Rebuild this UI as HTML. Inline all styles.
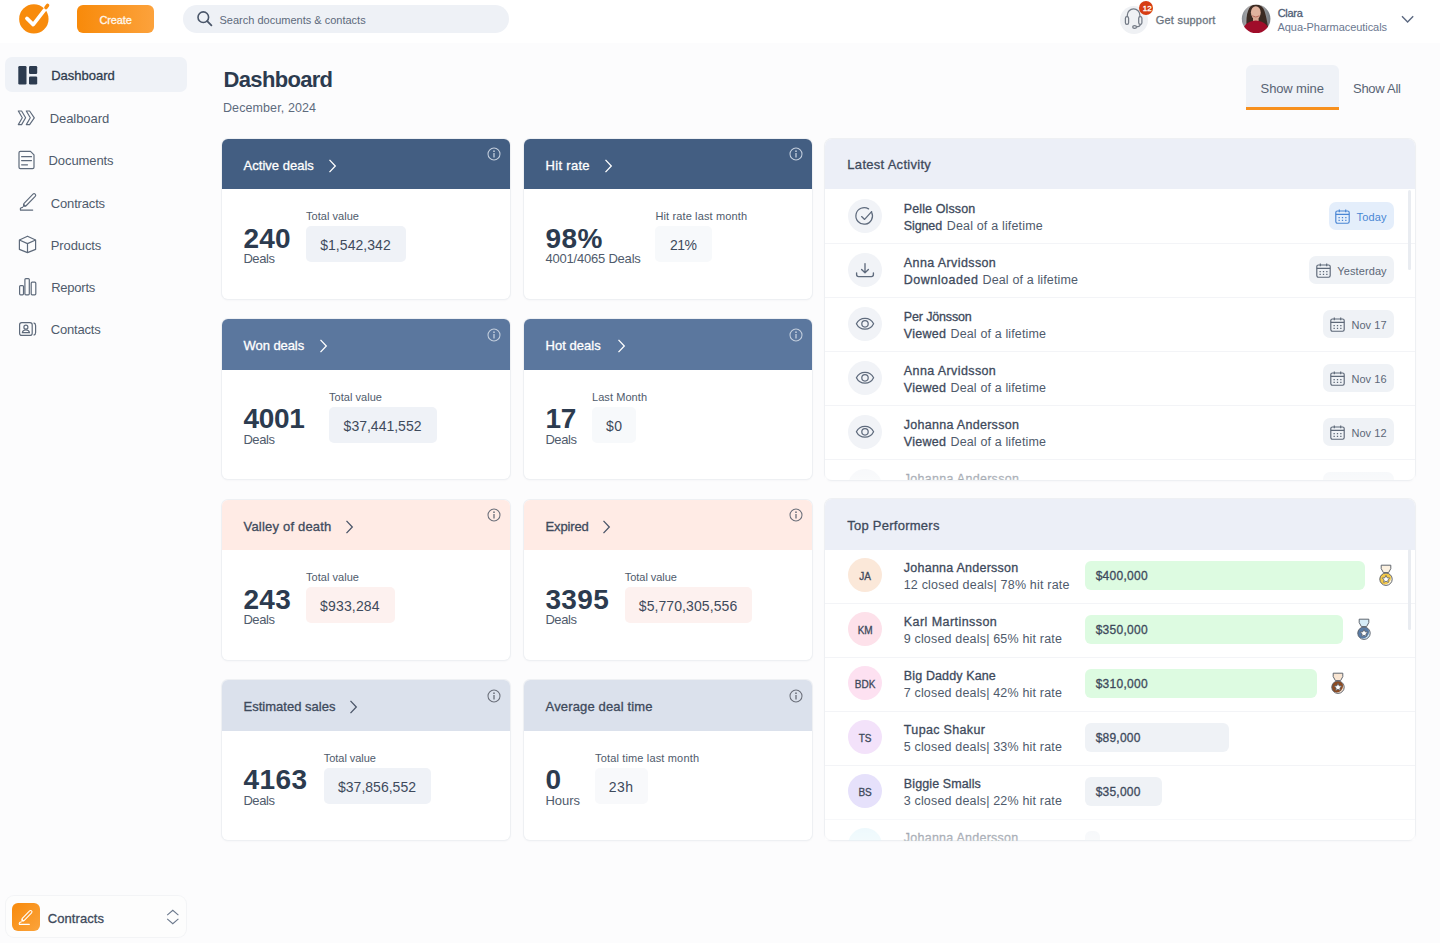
<!DOCTYPE html>
<html><head><meta charset="utf-8"><title>Dashboard</title>
<style>
html,body{margin:0;padding:0;}
body{width:1440px;height:943px;position:relative;overflow:hidden;background:#fcfcfd;font-family:"Liberation Sans",sans-serif;}
.t{position:absolute;white-space:nowrap;line-height:1;}
.r{position:absolute;}
.card{position:absolute;background:#fff;border-radius:6px;overflow:hidden;box-shadow:0 0 0 1px #eef0f3,0 1px 3px rgba(30,40,60,.05);}
.card .ch{position:absolute;left:0;top:0;right:0;height:50.5px;}
.panel{position:absolute;background:#fff;border-radius:7px;overflow:hidden;box-shadow:0 0 0 1px #eef0f3,0 1px 3px rgba(30,40,60,.05);}
.panel .ph{position:absolute;left:0;top:0;right:0;height:50.5px;background:#eceff7;}
</style></head><body>
<div class="r" style="left:0px;top:0px;width:1440px;height:43px;background:#ffffff;border-radius:0px;"></div>
<svg class="r" style="left:14px;top:0px" width="40" height="40" viewBox="14 0 40 40"><circle cx="33.85" cy="18.9" r="14.7" fill="#f88b0c"/>
<path d="M26.9 18.4 L33.2 24.6 L44.6 9.8" fill="none" stroke="#fff" stroke-width="3.6" stroke-linecap="round" stroke-linejoin="round"/>
<path d="M45.9 7.6 L47.6 5.4" stroke="#f88b0c" stroke-width="3.4" stroke-linecap="round"/></svg>
<div class="r" style="left:77px;top:5px;width:77px;height:28px;background:linear-gradient(90deg,#f88a0a,#fca23c);border-radius:6px;"></div>
<div class="t" style="left:99.55px;top:15.00px;font-size:11px;color:#fff8ee;-webkit-text-stroke:0.3px #fff8ee;letter-spacing:-0.160px;">Create</div>
<div class="r" style="left:183px;top:5px;width:326px;height:28px;background:#eef1f6;border-radius:14px;"></div>
<svg class="r" style="left:194px;top:8px" width="22" height="22" viewBox="194 8 22 22"><circle cx="203.3" cy="17.2" r="5.3" fill="none" stroke="#4a5669" stroke-width="1.6"/>
<path d="M207.2 21.1 L211.4 25.3" stroke="#4a5669" stroke-width="1.8" stroke-linecap="round"/></svg>
<div class="t" style="left:219.50px;top:15.00px;font-size:11px;color:#5d6a7c;">Search documents &amp; contacts</div>
<div class="r" style="left:1119.7px;top:5.5px;width:28px;height:28px;border-radius:50%;background:#eff1f4"></div>
<svg class="r" style="left:1120px;top:5px" width="28" height="28" viewBox="1120 5 28 28"><g fill="none" stroke="#737a85" stroke-width="1.25">
<path d="M1127.3 17 V15.2 a6.3 6.3 0 0 1 12.6 0 V17"/>
<rect x="1125.4" y="16.6" width="3.2" height="7.7" rx="1.6"/>
<rect x="1138.7" y="16.6" width="3.2" height="7.7" rx="1.6"/>
<path d="M1140.4 24.4 Q1140 26.9 1136.3 26.9"/>
<ellipse cx="1134.6" cy="26.9" rx="1.9" ry="1.4"/></g></svg>
<div class="r" style="left:1139px;top:0.6px;width:14.4px;height:14.4px;border-radius:50%;background:#d63c12"></div>
<div class="t" style="left:1142.75px;top:5.00px;font-size:8px;color:#ffffff;-webkit-text-stroke:0.3px #ffffff;">12</div>
<div class="t" style="left:1155.75px;top:15.00px;font-size:11px;color:#6b7480;-webkit-text-stroke:0.3px #6b7480;letter-spacing:0.220px;">Get support</div>
<svg class="r" style="left:1241px;top:4px" width="30" height="30" viewBox="1241 4 30 30"><defs><clipPath id="av"><circle cx="1256.1" cy="18.8" r="14.3"/></clipPath>
<filter id="avb" x="-10%" y="-10%" width="120%" height="120%"><feGaussianBlur stdDeviation="0.55"/></filter>
<linearGradient id="avbg" x1="0" y1="0" x2="1" y2="0"><stop offset="0" stop-color="#858b93"/><stop offset=".45" stop-color="#c8c3be"/><stop offset="1" stop-color="#6f767e"/></linearGradient></defs>
<g clip-path="url(#av)"><g filter="url(#avb)">
<rect x="1241" y="4" width="30" height="30" fill="url(#avbg)"/>
<path d="M1246.5 27 Q1246 16 1248 11 Q1250 4.5 1256 4.6 Q1262.5 4.8 1264.5 11 Q1266.5 17 1268 27 Z" fill="#3b2a23"/>
<ellipse cx="1255.8" cy="12.6" rx="4.9" ry="6.4" fill="#e1b39e"/>
<path d="M1253 17 h5.6 v5 h-5.6 z" fill="#d9a690"/>
<path d="M1242 34 Q1242.5 22 1255.8 20.6 Q1269 22 1270 34 Z" fill="#a00d2a"/>
<path d="M1252.2 15.8 Q1255.8 18.2 1259.4 15.8" fill="none" stroke="#b96a5c" stroke-width="1"/>
</g></g></svg>
<div class="t" style="left:1277.65px;top:8.00px;font-size:11px;color:#4f5d75;-webkit-text-stroke:0.3px #4f5d75;letter-spacing:-0.262px;">Clara</div>
<div class="t" style="left:1277.50px;top:22.00px;font-size:11px;color:#6b7890;letter-spacing:-0.059px;">Aqua-Pharmaceuticals</div>
<svg class="r" style="left:1398px;top:12px" width="18" height="14" viewBox="1398 12 18 14"><path d="M1402 16.3 L1407.6 22 L1413.2 16.3" fill="none" stroke="#5b6880" stroke-width="1.4"/></svg>
<div class="r" style="left:5px;top:57px;width:182px;height:35px;background:#eff2f7;border-radius:7px;"></div>
<svg class="r" style="left:16px;top:64px" width="24" height="24" viewBox="16 64 24 24"><rect x="18.3" y="66" width="8.2" height="18.4" rx="1.2" fill="#2c3b4f"/>
<rect x="29" y="66" width="8.2" height="8" rx="1.2" fill="#2c3b4f"/>
<rect x="29" y="76.4" width="8.2" height="8" rx="1.2" fill="#2c3b4f"/></svg>
<div class="t" style="left:51.15px;top:69.00px;font-size:13px;color:#2f3c4e;-webkit-text-stroke:0.3px #2f3c4e;">Dashboard</div>
<svg class="r" style="left:14px;top:106px" width="26" height="24" viewBox="14 106 26 24"><g fill="none" stroke="#5e6a7b" stroke-width="1.15" stroke-linejoin="round">
<path d="M18.3 111 H21.6 L25.6 117.8 L21.6 124.6 H18.3 L22.3 117.8 Z"/>
<path d="M26.3 111 H29.6 L34.3 117.8 L29.6 124.6 H26.3 L30.3 117.8 Z"/></g></svg>
<div class="t" style="left:49.70px;top:112.00px;font-size:13px;color:#4f5b6c;letter-spacing:-0.062px;">Dealboard</div>
<svg class="r" style="left:14px;top:148px" width="26" height="24" viewBox="14 148 26 24"><g fill="none" stroke="#5e6a7b" stroke-width="1.2" stroke-linejoin="round">
<path d="M19 152.8 Q19 151.4 20.4 151.4 H30.5 L34 154.9 V167.2 Q34 168.6 32.6 168.6 H20.4 Q19 168.6 19 167.2 Z"/>
<path d="M21.6 156.7 H31.5 M21.6 160.6 H31.5 M21.6 164.8 H27.5" stroke-linecap="round"/></g></svg>
<div class="t" style="left:48.50px;top:154.00px;font-size:13px;color:#4f5b6c;letter-spacing:-0.081px;">Documents</div>
<svg class="r" style="left:14px;top:190px" width="26" height="24" viewBox="14 190 26 24"><path d="M25.2 204.4 L34.1 195.3" stroke="#5e6a7b" stroke-width="4.3" stroke-linecap="round"/>
<path d="M25.2 204.4 L34.1 195.3" stroke="#fcfcfd" stroke-width="2.0" stroke-linecap="round"/>
<path d="M22.7 207.1 L23.5 203.4 L26.4 206.3 Z" fill="#5e6a7b"/>
<path d="M22.6 207.3 Q19.7 207.7 20.5 210.1 H32.7" fill="none" stroke="#5e6a7b" stroke-width="1.2" stroke-linecap="round"/></svg>
<div class="t" style="left:50.80px;top:197.00px;font-size:13px;color:#4f5b6c;letter-spacing:-0.166px;">Contracts</div>
<svg class="r" style="left:14px;top:232px" width="26" height="24" viewBox="14 232 26 24"><g fill="none" stroke="#5e6a7b" stroke-width="1.2" stroke-linejoin="round">
<path d="M27.5 236.2 L35.6 240 V249.4 L27.5 252.6 L19.4 249.4 V240 Z"/>
<path d="M19.4 240 L27.5 243.6 L35.6 240 M27.5 243.6 V252.6"/></g></svg>
<div class="t" style="left:50.80px;top:239.00px;font-size:13px;color:#4f5b6c;letter-spacing:-0.107px;">Products</div>
<svg class="r" style="left:14px;top:274px" width="26" height="24" viewBox="14 274 26 24"><g fill="none" stroke="#5e6a7b" stroke-width="1.2" stroke-linejoin="round">
<rect x="19.6" y="285.6" width="3.9" height="9.2" rx="1"/>
<rect x="24.9" y="278.6" width="4.4" height="16.2" rx="1"/>
<rect x="31.2" y="282.2" width="4.6" height="12.6" rx="1"/></g></svg>
<div class="t" style="left:51.20px;top:281.00px;font-size:13px;color:#4f5b6c;letter-spacing:-0.233px;">Reports</div>
<svg class="r" style="left:14px;top:318px" width="26" height="22" viewBox="14 318 26 22"><g fill="none" stroke="#5e6a7b" stroke-width="1.2">
<rect x="19.6" y="322.6" width="12.6" height="12.8" rx="2.2"/>
<circle cx="25.9" cy="327.2" r="2"/>
<path d="M22.4 332.6 Q22.6 330 25.9 330 Q29.2 330 29.4 332.6 Z"/>
<path d="M33.6 322.8 Q35.6 323.2 35.6 325.5 V332.5 Q35.6 334.8 33.6 335.2"/></g></svg>
<div class="t" style="left:50.80px;top:323.00px;font-size:13px;color:#4f5b6c;letter-spacing:-0.193px;">Contacts</div>
<div class="r" style="left:6px;top:896px;width:180px;height:41px;background:#fdfdfd;border-radius:8px;box-shadow:0 0 0 1px #f3f4f6;"></div>
<div class="r" style="left:12px;top:903px;width:28px;height:28px;background:linear-gradient(135deg,#f88a0c,#fba43c);border-radius:6px;"></div>
<svg class="r" style="left:12px;top:903px" width="28" height="28" viewBox="12 903 28 28"><path d="M23.3 919.4 L30.6 911.9" stroke="#fff" stroke-width="3.8" stroke-linecap="round"/>
<path d="M23.3 919.4 L30.6 911.9" stroke="#f9982a" stroke-width="1.7" stroke-linecap="round"/>
<path d="M21.2 921.8 L21.9 918.6 L24.4 921.1 Z" fill="#fff"/>
<path d="M21.1 922 Q18.7 922.4 19.4 924.4 H29.3" fill="none" stroke="#fff" stroke-width="1.1" stroke-linecap="round"/></svg>
<div class="t" style="left:47.65px;top:912.00px;font-size:13px;color:#3e4a5b;-webkit-text-stroke:0.3px #3e4a5b;letter-spacing:0.097px;">Contracts</div>
<svg class="r" style="left:160px;top:906px" width="24" height="22" viewBox="160 906 24 22"><path d="M167.2 915.2 L172.8 910.3 L178.4 915.2 M167.2 918.8 L172.8 923.7 L178.4 918.8" fill="none" stroke="#6b788c" stroke-width="1.1"/></svg>
<div class="t" style="left:223.60px;top:69.00px;font-size:22px;color:#2c3b4f;font-weight:700;letter-spacing:-0.684px;">Dashboard</div>
<div class="t" style="left:223.00px;top:102.00px;font-size:12.5px;color:#5e6b7d;letter-spacing:0.096px;">December, 2024</div>
<div class="r" style="left:1246px;top:65px;width:93px;height:45px;background:#eff2f7;border-radius:5px;border-radius:6px 6px 0 0;"></div>
<div class="r" style="left:1246px;top:107px;width:93px;height:3px;background:#f7901e;border-radius:0px;"></div>
<div class="t" style="left:1260.60px;top:82.00px;font-size:13px;color:#596474;letter-spacing:-0.122px;">Show mine</div>
<div class="t" style="left:1353.00px;top:82.00px;font-size:13px;color:#596474;letter-spacing:-0.268px;">Show All</div>
<div class="card" style="left:222px;top:138.7px;width:288px;height:160px"><div class="ch" style="background:#435e82"></div></div>
<div class="t" style="left:243.55px;top:159.00px;font-size:13px;color:#ffffff;-webkit-text-stroke:0.3px #ffffff;letter-spacing:0.016px;">Active deals</div>
<svg class="r" style="left:327.79999999999995px;top:158.5px" width="9" height="14" viewBox="0 0 9 14">
<path d="M1.5 0.9 L7.3 7 L1.5 13.1" fill="none" stroke="#ffffff" stroke-width="1.3"/></svg>
<svg class="r" style="left:487px;top:147.2px" width="14" height="14" viewBox="0 0 14 14">
<circle cx="7" cy="7" r="6" fill="none" stroke="#c3cedd" stroke-width="1.05"/>
<circle cx="7" cy="4.2" r="0.85" fill="#c3cedd"/><path d="M7 6 V10.6" stroke="#c3cedd" stroke-width="1.3"/></svg>
<div class="t" style="left:243.40px;top:225.00px;font-size:28px;color:#2c3b4f;font-weight:700;letter-spacing:0.275px;">240</div>
<div class="t" style="left:243.40px;top:252.00px;font-size:13px;color:#4f5b6c;letter-spacing:-0.413px;">Deals</div>
<div class="t" style="left:306.00px;top:211.00px;font-size:11px;color:#4f5b6c;letter-spacing:0.037px;">Total value</div>
<div class="r" style="left:306px;top:226.1px;width:100px;height:36.00000000000003px;background:#eff2f7;border-radius:5px;"></div>
<div class="t" style="left:320.20px;top:238.00px;font-size:14px;color:#3e4a5c;letter-spacing:0.053px;">$1,542,342</div>
<div class="card" style="left:524px;top:138.7px;width:288px;height:160px"><div class="ch" style="background:#435e82"></div></div>
<div class="t" style="left:545.55px;top:159.00px;font-size:13px;color:#ffffff;-webkit-text-stroke:0.3px #ffffff;letter-spacing:0.304px;">Hit rate</div>
<svg class="r" style="left:604.4px;top:158.5px" width="9" height="14" viewBox="0 0 9 14">
<path d="M1.5 0.9 L7.3 7 L1.5 13.1" fill="none" stroke="#ffffff" stroke-width="1.3"/></svg>
<svg class="r" style="left:789px;top:147.2px" width="14" height="14" viewBox="0 0 14 14">
<circle cx="7" cy="7" r="6" fill="none" stroke="#c3cedd" stroke-width="1.05"/>
<circle cx="7" cy="4.2" r="0.85" fill="#c3cedd"/><path d="M7 6 V10.6" stroke="#c3cedd" stroke-width="1.3"/></svg>
<div class="t" style="left:545.40px;top:225.00px;font-size:28px;color:#2c3b4f;font-weight:700;letter-spacing:0.450px;">98%</div>
<div class="t" style="left:545.40px;top:252.00px;font-size:13px;color:#4f5b6c;letter-spacing:-0.204px;">4001/4065 Deals</div>
<div class="t" style="left:655.40px;top:211.00px;font-size:11px;color:#4f5b6c;letter-spacing:0.131px;">Hit rate last month</div>
<div class="r" style="left:655.4px;top:226.1px;width:56.30000000000007px;height:36.00000000000003px;background:#f7f9fb;border-radius:5px;"></div>
<div class="t" style="left:670.00px;top:238.00px;font-size:14px;color:#3e4a5c;letter-spacing:-0.500px;">21%</div>
<div class="card" style="left:222px;top:319.2px;width:288px;height:160px"><div class="ch" style="background:#5b779e"></div></div>
<div class="t" style="left:243.55px;top:339.00px;font-size:13px;color:#ffffff;-webkit-text-stroke:0.3px #ffffff;letter-spacing:-0.069px;">Won deals</div>
<svg class="r" style="left:319.4px;top:339.0px" width="9" height="14" viewBox="0 0 9 14">
<path d="M1.5 0.9 L7.3 7 L1.5 13.1" fill="none" stroke="#ffffff" stroke-width="1.3"/></svg>
<svg class="r" style="left:487px;top:327.7px" width="14" height="14" viewBox="0 0 14 14">
<circle cx="7" cy="7" r="6" fill="none" stroke="#c3cedd" stroke-width="1.05"/>
<circle cx="7" cy="4.2" r="0.85" fill="#c3cedd"/><path d="M7 6 V10.6" stroke="#c3cedd" stroke-width="1.3"/></svg>
<div class="t" style="left:243.40px;top:405.00px;font-size:28px;color:#2c3b4f;font-weight:700;letter-spacing:-0.317px;">4001</div>
<div class="t" style="left:243.40px;top:433.00px;font-size:13px;color:#4f5b6c;letter-spacing:-0.413px;">Deals</div>
<div class="t" style="left:329.00px;top:392.00px;font-size:11px;color:#4f5b6c;letter-spacing:0.037px;">Total value</div>
<div class="r" style="left:329px;top:406.6px;width:108px;height:36.0px;background:#eff2f7;border-radius:5px;"></div>
<div class="t" style="left:343.60px;top:419.00px;font-size:14px;color:#3e4a5c;">$37,441,552</div>
<div class="card" style="left:524px;top:319.2px;width:288px;height:160px"><div class="ch" style="background:#5b779e"></div></div>
<div class="t" style="left:545.55px;top:339.00px;font-size:13px;color:#ffffff;-webkit-text-stroke:0.3px #ffffff;letter-spacing:0.028px;">Hot deals</div>
<svg class="r" style="left:616.9px;top:339.0px" width="9" height="14" viewBox="0 0 9 14">
<path d="M1.5 0.9 L7.3 7 L1.5 13.1" fill="none" stroke="#ffffff" stroke-width="1.3"/></svg>
<svg class="r" style="left:789px;top:327.7px" width="14" height="14" viewBox="0 0 14 14">
<circle cx="7" cy="7" r="6" fill="none" stroke="#c3cedd" stroke-width="1.05"/>
<circle cx="7" cy="4.2" r="0.85" fill="#c3cedd"/><path d="M7 6 V10.6" stroke="#c3cedd" stroke-width="1.3"/></svg>
<div class="t" style="left:545.40px;top:405.00px;font-size:28px;color:#2c3b4f;font-weight:700;letter-spacing:-0.225px;">17</div>
<div class="t" style="left:545.40px;top:433.00px;font-size:13px;color:#4f5b6c;letter-spacing:-0.412px;">Deals</div>
<div class="t" style="left:592.00px;top:392.00px;font-size:11px;color:#4f5b6c;letter-spacing:0.069px;">Last Month</div>
<div class="r" style="left:592px;top:406.6px;width:44px;height:36.0px;background:#f7f9fb;border-radius:5px;"></div>
<div class="t" style="left:606.00px;top:419.00px;font-size:14px;color:#3e4a5c;letter-spacing:0.375px;">$0</div>
<div class="card" style="left:222px;top:499.8px;width:288px;height:160px"><div class="ch" style="background:#ffebe5"></div></div>
<div class="t" style="left:243.55px;top:520.00px;font-size:13px;color:#3e4a5c;-webkit-text-stroke:0.3px #3e4a5c;letter-spacing:0.193px;">Valley of death</div>
<svg class="r" style="left:345.2px;top:519.6px" width="9" height="14" viewBox="0 0 9 14">
<path d="M1.5 0.9 L7.3 7 L1.5 13.1" fill="none" stroke="#4a5568" stroke-width="1.3"/></svg>
<svg class="r" style="left:487px;top:508.3px" width="14" height="14" viewBox="0 0 14 14">
<circle cx="7" cy="7" r="6" fill="none" stroke="#6b6f7a" stroke-width="1.05"/>
<circle cx="7" cy="4.2" r="0.85" fill="#6b6f7a"/><path d="M7 6 V10.6" stroke="#6b6f7a" stroke-width="1.3"/></svg>
<div class="t" style="left:243.40px;top:586.00px;font-size:28px;color:#2c3b4f;font-weight:700;letter-spacing:0.325px;">243</div>
<div class="t" style="left:243.40px;top:613.00px;font-size:13px;color:#4f5b6c;letter-spacing:-0.413px;">Deals</div>
<div class="t" style="left:306.00px;top:572.00px;font-size:11px;color:#4f5b6c;letter-spacing:0.037px;">Total value</div>
<div class="r" style="left:306px;top:587.2px;width:88.60000000000002px;height:36.0px;background:#fdf1ef;border-radius:5px;"></div>
<div class="t" style="left:320.00px;top:599.00px;font-size:14px;color:#3e4a5c;letter-spacing:0.175px;">$933,284</div>
<div class="card" style="left:524px;top:499.8px;width:288px;height:160px"><div class="ch" style="background:#ffebe5"></div></div>
<div class="t" style="left:545.55px;top:520.00px;font-size:13px;color:#3e4a5c;-webkit-text-stroke:0.3px #3e4a5c;letter-spacing:-0.137px;">Expired</div>
<svg class="r" style="left:601.6px;top:519.6px" width="9" height="14" viewBox="0 0 9 14">
<path d="M1.5 0.9 L7.3 7 L1.5 13.1" fill="none" stroke="#4a5568" stroke-width="1.3"/></svg>
<svg class="r" style="left:789px;top:508.3px" width="14" height="14" viewBox="0 0 14 14">
<circle cx="7" cy="7" r="6" fill="none" stroke="#6b6f7a" stroke-width="1.05"/>
<circle cx="7" cy="4.2" r="0.85" fill="#6b6f7a"/><path d="M7 6 V10.6" stroke="#6b6f7a" stroke-width="1.3"/></svg>
<div class="t" style="left:545.40px;top:586.00px;font-size:28px;color:#2c3b4f;font-weight:700;letter-spacing:0.367px;">3395</div>
<div class="t" style="left:545.40px;top:613.00px;font-size:13px;color:#4f5b6c;letter-spacing:-0.412px;">Deals</div>
<div class="t" style="left:624.80px;top:572.00px;font-size:11px;color:#4f5b6c;letter-spacing:-0.042px;">Total value</div>
<div class="r" style="left:624.8px;top:587.2px;width:127.70000000000005px;height:36.0px;background:#fdf1ef;border-radius:5px;"></div>
<div class="t" style="left:638.75px;top:599.00px;font-size:14px;color:#3e4a5c;letter-spacing:0.090px;">$5,770,305,556</div>
<div class="card" style="left:222px;top:680.3px;width:288px;height:160px"><div class="ch" style="background:#dbe1ec"></div></div>
<div class="t" style="left:243.55px;top:700.00px;font-size:13px;color:#3e4a5c;-webkit-text-stroke:0.3px #3e4a5c;letter-spacing:0.011px;">Estimated sales</div>
<svg class="r" style="left:349.4px;top:700.0999999999999px" width="9" height="14" viewBox="0 0 9 14">
<path d="M1.5 0.9 L7.3 7 L1.5 13.1" fill="none" stroke="#4a5568" stroke-width="1.3"/></svg>
<svg class="r" style="left:487px;top:688.8px" width="14" height="14" viewBox="0 0 14 14">
<circle cx="7" cy="7" r="6" fill="none" stroke="#6b6f7a" stroke-width="1.05"/>
<circle cx="7" cy="4.2" r="0.85" fill="#6b6f7a"/><path d="M7 6 V10.6" stroke="#6b6f7a" stroke-width="1.3"/></svg>
<div class="t" style="left:243.40px;top:766.00px;font-size:28px;color:#2c3b4f;font-weight:700;letter-spacing:0.450px;">4163</div>
<div class="t" style="left:243.40px;top:794.00px;font-size:13px;color:#4f5b6c;letter-spacing:-0.413px;">Deals</div>
<div class="t" style="left:323.75px;top:753.00px;font-size:11px;color:#4f5b6c;letter-spacing:-0.037px;">Total value</div>
<div class="r" style="left:323.75px;top:767.6999999999999px;width:107.25px;height:36.0px;background:#eff2f7;border-radius:5px;"></div>
<div class="t" style="left:338.00px;top:780.00px;font-size:14px;color:#3e4a5c;letter-spacing:0.013px;">$37,856,552</div>
<div class="card" style="left:524px;top:680.3px;width:288px;height:160px"><div class="ch" style="background:#dbe1ec"></div></div>
<div class="t" style="left:545.55px;top:700.00px;font-size:13px;color:#3e4a5c;-webkit-text-stroke:0.3px #3e4a5c;letter-spacing:0.150px;">Average deal time</div>
<svg class="r" style="left:789px;top:688.8px" width="14" height="14" viewBox="0 0 14 14">
<circle cx="7" cy="7" r="6" fill="none" stroke="#6b6f7a" stroke-width="1.05"/>
<circle cx="7" cy="4.2" r="0.85" fill="#6b6f7a"/><path d="M7 6 V10.6" stroke="#6b6f7a" stroke-width="1.3"/></svg>
<div class="t" style="left:545.40px;top:766.00px;font-size:28px;color:#2c3b4f;font-weight:700;">0</div>
<div class="t" style="left:545.40px;top:794.00px;font-size:13px;color:#4f5b6c;">Hours</div>
<div class="t" style="left:595.00px;top:753.00px;font-size:11px;color:#4f5b6c;letter-spacing:0.156px;">Total time last month</div>
<div class="r" style="left:595px;top:767.6999999999999px;width:52.700000000000045px;height:36.0px;background:#f8f9fb;border-radius:5px;"></div>
<div class="t" style="left:608.75px;top:780.00px;font-size:14px;color:#3e4a5c;letter-spacing:0.438px;">23h</div>
<div class="panel" style="left:825px;top:138.5px;width:590px;height:341px"><div class="ph"></div></div>
<div class="t" style="left:847.35px;top:158.00px;font-size:13px;color:#3e4a5c;-webkit-text-stroke:0.3px #3e4a5c;letter-spacing:0.286px;">Latest Activity</div>
<div class="r" style="left:848px;top:199.0px;width:34px;height:34px;border-radius:50%;background:#f1f3f7"></div>
<svg class="r" style="left:854px;top:205.0px" width="22" height="22" viewBox="0 0 22 22"><path d="M17.6 7.2 A8.3 8.3 0 1 1 14.6 3.9" fill="none" stroke="#5f6b7d" stroke-width="1.25" stroke-linecap="round"/><path d="M7.6 11.6 L10.6 14.4 L17.6 6.6" fill="none" stroke="#5f6b7d" stroke-width="1.3" stroke-linecap="round" stroke-linejoin="round"/></svg>
<div class="t" style="left:903.85px;top:203.00px;font-size:12.5px;color:#3e4a5c;-webkit-text-stroke:0.3px #3e4a5c;letter-spacing:0.107px;">Pelle Olsson</div>
<div class="t" style="left:903.85px;top:220.00px;font-size:12.5px;color:#3e4a5c;-webkit-text-stroke:0.3px #3e4a5c;letter-spacing:-0.135px;">Signed</div>
<div class="t" style="left:946.70px;top:220.00px;font-size:12.5px;color:#4f5b6c;letter-spacing:0.175px;">Deal of a lifetime</div>
<div class="r" style="left:1328.5px;top:202.3px;width:65.5px;height:27.399999999999977px;background:#e4eefb;border-radius:7px;"></div>
<svg class="r" style="left:1335.0px;top:208.9px" width="15" height="15" viewBox="0 0 15 15">
<rect x="0.8" y="2" width="13.4" height="12.2" rx="1.6" fill="none" stroke="#4a86d4" stroke-width="1.15"/>
<path d="M0.8 5.3 H14.2 M4.3 0.4 V3.2 M10.7 0.4 V3.2" stroke="#4a86d4" stroke-width="1.15"/>
<path d="M3.5 8.6 h1.3 M6.85 8.6 h1.3 M10.2 8.6 h1.3 M3.5 11.4 h1.3 M6.85 11.4 h1.3 M10.2 11.4 h1.3" stroke="#4a86d4" stroke-width="1.1"/></svg>
<div class="t" style="left:1356.50px;top:212.00px;font-size:11px;color:#4a86d4;letter-spacing:0.181px;">Today</div>
<div class="r" style="left:825px;top:243.0px;width:590px;height:1.0px;background:#f3f4f7;border-radius:0px;"></div>
<div class="r" style="left:848px;top:253.0px;width:34px;height:34px;border-radius:50%;background:#f1f3f7"></div>
<svg class="r" style="left:854px;top:259.0px" width="22" height="22" viewBox="0 0 22 22"><path d="M11 4.6 V13.6 M7.6 10.4 L11 13.8 L14.4 10.4" fill="none" stroke="#5f6b7d" stroke-width="1.35" stroke-linecap="round" stroke-linejoin="round"/><path d="M2.6 13.8 V15.6 Q2.6 17.6 4.6 17.6 H17.4 Q19.4 17.6 19.4 15.6 V13.8" fill="none" stroke="#5f6b7d" stroke-width="1.35" stroke-linecap="round"/></svg>
<div class="t" style="left:903.85px;top:257.00px;font-size:12.5px;color:#3e4a5c;-webkit-text-stroke:0.3px #3e4a5c;letter-spacing:0.394px;">Anna Arvidsson</div>
<div class="t" style="left:903.85px;top:274.00px;font-size:12.5px;color:#3e4a5c;-webkit-text-stroke:0.3px #3e4a5c;letter-spacing:0.500px;">Downloaded</div>
<div class="t" style="left:982.50px;top:274.00px;font-size:12.5px;color:#4f5b6c;letter-spacing:0.140px;">Deal of a lifetime</div>
<div class="r" style="left:1309.3px;top:256.3px;width:84.70000000000005px;height:27.399999999999977px;background:#eff2f6;border-radius:7px;"></div>
<svg class="r" style="left:1315.8px;top:262.9px" width="15" height="15" viewBox="0 0 15 15">
<rect x="0.8" y="2" width="13.4" height="12.2" rx="1.6" fill="none" stroke="#5d6878" stroke-width="1.15"/>
<path d="M0.8 5.3 H14.2 M4.3 0.4 V3.2 M10.7 0.4 V3.2" stroke="#5d6878" stroke-width="1.15"/>
<path d="M3.5 8.6 h1.3 M6.85 8.6 h1.3 M10.2 8.6 h1.3 M3.5 11.4 h1.3 M6.85 11.4 h1.3 M10.2 11.4 h1.3" stroke="#5d6878" stroke-width="1.1"/></svg>
<div class="t" style="left:1337.30px;top:266.00px;font-size:11px;color:#5d6878;letter-spacing:0.100px;">Yesterday</div>
<div class="r" style="left:825px;top:297.0px;width:590px;height:1.0px;background:#f3f4f7;border-radius:0px;"></div>
<div class="r" style="left:848px;top:307.0px;width:34px;height:34px;border-radius:50%;background:#f1f3f7"></div>
<svg class="r" style="left:854px;top:313.0px" width="22" height="22" viewBox="0 0 22 22"><path d="M2.4 10.8 C6 3.6 16 3.6 19.6 10.8 C16 18 6 18 2.4 10.8 Z" fill="none" stroke="#5f6b7d" stroke-width="1.25" stroke-linejoin="round"/><circle cx="11" cy="10.8" r="3.2" fill="none" stroke="#5f6b7d" stroke-width="1.25"/></svg>
<div class="t" style="left:903.85px;top:311.00px;font-size:12.5px;color:#3e4a5c;-webkit-text-stroke:0.3px #3e4a5c;letter-spacing:-0.150px;">Per Jönsson</div>
<div class="t" style="left:903.85px;top:328.00px;font-size:12.5px;color:#3e4a5c;-webkit-text-stroke:0.3px #3e4a5c;letter-spacing:0.250px;">Viewed</div>
<div class="t" style="left:950.50px;top:328.00px;font-size:12.5px;color:#4f5b6c;letter-spacing:0.140px;">Deal of a lifetime</div>
<div class="r" style="left:1323.4px;top:310.3px;width:70.59999999999991px;height:27.399999999999977px;background:#eff2f6;border-radius:7px;"></div>
<svg class="r" style="left:1329.9px;top:316.9px" width="15" height="15" viewBox="0 0 15 15">
<rect x="0.8" y="2" width="13.4" height="12.2" rx="1.6" fill="none" stroke="#5d6878" stroke-width="1.15"/>
<path d="M0.8 5.3 H14.2 M4.3 0.4 V3.2 M10.7 0.4 V3.2" stroke="#5d6878" stroke-width="1.15"/>
<path d="M3.5 8.6 h1.3 M6.85 8.6 h1.3 M10.2 8.6 h1.3 M3.5 11.4 h1.3 M6.85 11.4 h1.3 M10.2 11.4 h1.3" stroke="#5d6878" stroke-width="1.1"/></svg>
<div class="t" style="left:1351.40px;top:320.00px;font-size:11px;color:#5d6878;letter-spacing:0.065px;">Nov 17</div>
<div class="r" style="left:825px;top:351.0px;width:590px;height:1.0px;background:#f3f4f7;border-radius:0px;"></div>
<div class="r" style="left:848px;top:361.0px;width:34px;height:34px;border-radius:50%;background:#f1f3f7"></div>
<svg class="r" style="left:854px;top:367.0px" width="22" height="22" viewBox="0 0 22 22"><path d="M2.4 10.8 C6 3.6 16 3.6 19.6 10.8 C16 18 6 18 2.4 10.8 Z" fill="none" stroke="#5f6b7d" stroke-width="1.25" stroke-linejoin="round"/><circle cx="11" cy="10.8" r="3.2" fill="none" stroke="#5f6b7d" stroke-width="1.25"/></svg>
<div class="t" style="left:903.85px;top:365.00px;font-size:12.5px;color:#3e4a5c;-webkit-text-stroke:0.3px #3e4a5c;letter-spacing:0.394px;">Anna Arvidsson</div>
<div class="t" style="left:903.85px;top:382.00px;font-size:12.5px;color:#3e4a5c;-webkit-text-stroke:0.3px #3e4a5c;letter-spacing:0.250px;">Viewed</div>
<div class="t" style="left:950.50px;top:382.00px;font-size:12.5px;color:#4f5b6c;letter-spacing:0.140px;">Deal of a lifetime</div>
<div class="r" style="left:1323.4px;top:364.3px;width:70.59999999999991px;height:27.399999999999977px;background:#eff2f6;border-radius:7px;"></div>
<svg class="r" style="left:1329.9px;top:370.9px" width="15" height="15" viewBox="0 0 15 15">
<rect x="0.8" y="2" width="13.4" height="12.2" rx="1.6" fill="none" stroke="#5d6878" stroke-width="1.15"/>
<path d="M0.8 5.3 H14.2 M4.3 0.4 V3.2 M10.7 0.4 V3.2" stroke="#5d6878" stroke-width="1.15"/>
<path d="M3.5 8.6 h1.3 M6.85 8.6 h1.3 M10.2 8.6 h1.3 M3.5 11.4 h1.3 M6.85 11.4 h1.3 M10.2 11.4 h1.3" stroke="#5d6878" stroke-width="1.1"/></svg>
<div class="t" style="left:1351.40px;top:374.00px;font-size:11px;color:#5d6878;letter-spacing:0.065px;">Nov 16</div>
<div class="r" style="left:825px;top:405.0px;width:590px;height:1.0px;background:#f3f4f7;border-radius:0px;"></div>
<div class="r" style="left:848px;top:415.0px;width:34px;height:34px;border-radius:50%;background:#f1f3f7"></div>
<svg class="r" style="left:854px;top:421.0px" width="22" height="22" viewBox="0 0 22 22"><path d="M2.4 10.8 C6 3.6 16 3.6 19.6 10.8 C16 18 6 18 2.4 10.8 Z" fill="none" stroke="#5f6b7d" stroke-width="1.25" stroke-linejoin="round"/><circle cx="11" cy="10.8" r="3.2" fill="none" stroke="#5f6b7d" stroke-width="1.25"/></svg>
<div class="t" style="left:903.85px;top:419.00px;font-size:12.5px;color:#3e4a5c;-webkit-text-stroke:0.3px #3e4a5c;letter-spacing:0.281px;">Johanna Andersson</div>
<div class="t" style="left:903.85px;top:436.00px;font-size:12.5px;color:#3e4a5c;-webkit-text-stroke:0.3px #3e4a5c;letter-spacing:0.250px;">Viewed</div>
<div class="t" style="left:950.50px;top:436.00px;font-size:12.5px;color:#4f5b6c;letter-spacing:0.140px;">Deal of a lifetime</div>
<div class="r" style="left:1323.4px;top:418.3px;width:70.59999999999991px;height:27.399999999999977px;background:#eff2f6;border-radius:7px;"></div>
<svg class="r" style="left:1329.9px;top:424.9px" width="15" height="15" viewBox="0 0 15 15">
<rect x="0.8" y="2" width="13.4" height="12.2" rx="1.6" fill="none" stroke="#5d6878" stroke-width="1.15"/>
<path d="M0.8 5.3 H14.2 M4.3 0.4 V3.2 M10.7 0.4 V3.2" stroke="#5d6878" stroke-width="1.15"/>
<path d="M3.5 8.6 h1.3 M6.85 8.6 h1.3 M10.2 8.6 h1.3 M3.5 11.4 h1.3 M6.85 11.4 h1.3 M10.2 11.4 h1.3" stroke="#5d6878" stroke-width="1.1"/></svg>
<div class="t" style="left:1351.40px;top:428.00px;font-size:11px;color:#5d6878;letter-spacing:0.065px;">Nov 12</div>
<div class="r" style="left:0;top:0;width:1440px;height:943px;clip-path:inset(138.5px 25px 463.5px 825px)">
<div class="r" style="left:825px;top:459.0px;width:590px;height:1.0px;background:#f3f4f7;border-radius:0px;"></div>
<div class="r" style="left:848px;top:469.0px;width:34px;height:34px;border-radius:50%;background:#f1f3f7"></div>
<div class="t" style="left:903.85px;top:473.00px;font-size:12.5px;color:#3e4a5c;-webkit-text-stroke:0.3px #3e4a5c;letter-spacing:0.281px;">Johanna Andersson</div>
<div class="r" style="left:1323.4px;top:472.3px;width:70.59999999999991px;height:27.399999999999977px;background:#eff2f6;border-radius:7px;"></div>
<div class="r" style="left:825px;top:459.5px;width:590px;height:20.0px;background:linear-gradient(rgba(255,255,255,.35),rgba(255,255,255,.6))"></div>
</div>
<div class="r" style="left:1408px;top:190px;width:3px;height:80px;background:#e9ecf1;border-radius:2px;"></div>
<div class="panel" style="left:825px;top:499.3px;width:590px;height:341px"><div class="ph"></div></div>
<div class="t" style="left:847.15px;top:519.00px;font-size:13px;color:#3e4a5c;-webkit-text-stroke:0.3px #3e4a5c;letter-spacing:0.263px;">Top Performers</div>
<div class="r" style="left:848px;top:558.3px;width:34px;height:34px;border-radius:50%;background:#fbe8d9"></div>
<div class="t" style="left:859.27px;top:572.00px;font-size:10px;color:#3e4a5c;-webkit-text-stroke:0.3px #3e4a5c;">JA</div>
<div class="t" style="left:903.85px;top:562.00px;font-size:12.5px;color:#3e4a5c;-webkit-text-stroke:0.3px #3e4a5c;letter-spacing:0.244px;">Johanna Andersson</div>
<div class="t" style="left:903.70px;top:579.00px;font-size:12.5px;color:#4f5b6c;letter-spacing:0.195px;">12 closed deals| 78% hit rate</div>
<div class="r" style="left:1085px;top:561px;width:280.29999999999995px;height:29px;background:#ddfbe1;border-radius:6px;"></div>
<div class="t" style="left:1095.65px;top:570.00px;font-size:12px;color:#3e4a5c;-webkit-text-stroke:0.3px #3e4a5c;letter-spacing:0.286px;">$400,000</div>
<svg class="r" style="left:1378.3px;top:564px" width="16" height="23" viewBox="0 0 16 23">
<defs><clipPath id="mc1378"><circle cx="8" cy="15.2" r="6.2"/></clipPath></defs>
<path d="M3.2 1.2 H12.8 V4.6 L10.6 8.6 H5.4 L3.2 4.6 Z" fill="#fcf1e0" stroke="#5a5f68" stroke-width="0.95" stroke-linejoin="round"/>
<circle cx="8" cy="15.2" r="6.2" fill="#fbf5e6"/>
<g clip-path="url(#mc1378)"><circle cx="6.6" cy="14" r="6.4" fill="#f3c84a"/></g>
<circle cx="8" cy="15.2" r="6.2" fill="none" stroke="#5a5f68" stroke-width="0.95"/>
<path d="M8 11.4 L9.15 13.75 L11.7 14.1 L9.85 15.9 L10.3 18.4 L8 17.2 L5.7 18.4 L6.15 15.9 L4.3 14.1 L6.85 13.75 Z" fill="#fff" stroke="#5a5f68" stroke-width="0.8" stroke-linejoin="round"/></svg>
<div class="r" style="left:825px;top:602.5px;width:590px;height:1.0px;background:#f3f4f7;border-radius:0px;"></div>
<div class="r" style="left:848px;top:612.3px;width:34px;height:34px;border-radius:50%;background:#fde1ea"></div>
<div class="t" style="left:857.65px;top:626.00px;font-size:10px;color:#3e4a5c;-webkit-text-stroke:0.3px #3e4a5c;">KM</div>
<div class="t" style="left:903.85px;top:616.00px;font-size:12.5px;color:#3e4a5c;-webkit-text-stroke:0.3px #3e4a5c;letter-spacing:0.437px;">Karl Martinsson</div>
<div class="t" style="left:903.70px;top:633.00px;font-size:12.5px;color:#4f5b6c;letter-spacing:0.182px;">9 closed deals| 65% hit rate</div>
<div class="r" style="left:1085px;top:615px;width:257.70000000000005px;height:29px;background:#ddfbe1;border-radius:6px;"></div>
<div class="t" style="left:1095.65px;top:624.00px;font-size:12px;color:#3e4a5c;-webkit-text-stroke:0.3px #3e4a5c;letter-spacing:0.286px;">$350,000</div>
<svg class="r" style="left:1355.7px;top:618px" width="16" height="23" viewBox="0 0 16 23">
<defs><clipPath id="mc1355"><circle cx="8" cy="15.2" r="6.2"/></clipPath></defs>
<path d="M3.2 1.2 H12.8 V4.6 L10.6 8.6 H5.4 L3.2 4.6 Z" fill="#d6ecf8" stroke="#5a5f68" stroke-width="0.95" stroke-linejoin="round"/>
<circle cx="8" cy="15.2" r="6.2" fill="#d6ecf8"/>
<g clip-path="url(#mc1355)"><circle cx="6.6" cy="14" r="6.4" fill="#5a7ca6"/></g>
<circle cx="8" cy="15.2" r="6.2" fill="none" stroke="#5a5f68" stroke-width="0.95"/>
<path d="M8 11.4 L9.15 13.75 L11.7 14.1 L9.85 15.9 L10.3 18.4 L8 17.2 L5.7 18.4 L6.15 15.9 L4.3 14.1 L6.85 13.75 Z" fill="#fff" stroke="#5a5f68" stroke-width="0.8" stroke-linejoin="round"/></svg>
<div class="r" style="left:825px;top:656.5px;width:590px;height:1.0px;background:#f3f4f7;border-radius:0px;"></div>
<div class="r" style="left:848px;top:666.3px;width:34px;height:34px;border-radius:50%;background:#fde1f1"></div>
<div class="t" style="left:854.84px;top:680.00px;font-size:10px;color:#3e4a5c;-webkit-text-stroke:0.3px #3e4a5c;">BDK</div>
<div class="t" style="left:903.85px;top:670.00px;font-size:12.5px;color:#3e4a5c;-webkit-text-stroke:0.3px #3e4a5c;letter-spacing:0.125px;">Big Daddy Kane</div>
<div class="t" style="left:903.70px;top:687.00px;font-size:12.5px;color:#4f5b6c;letter-spacing:0.182px;">7 closed deals| 42% hit rate</div>
<div class="r" style="left:1085px;top:669px;width:231.70000000000005px;height:29px;background:#ddfbe1;border-radius:6px;"></div>
<div class="t" style="left:1095.65px;top:678.00px;font-size:12px;color:#3e4a5c;-webkit-text-stroke:0.3px #3e4a5c;letter-spacing:0.286px;">$310,000</div>
<svg class="r" style="left:1329.7px;top:672px" width="16" height="23" viewBox="0 0 16 23">
<defs><clipPath id="mc1329"><circle cx="8" cy="15.2" r="6.2"/></clipPath></defs>
<path d="M3.2 1.2 H12.8 V4.6 L10.6 8.6 H5.4 L3.2 4.6 Z" fill="#f9e5d2" stroke="#5a5f68" stroke-width="0.95" stroke-linejoin="round"/>
<circle cx="8" cy="15.2" r="6.2" fill="#f6e4d4"/>
<g clip-path="url(#mc1329)"><circle cx="6.6" cy="14" r="6.4" fill="#8c4b22"/></g>
<circle cx="8" cy="15.2" r="6.2" fill="none" stroke="#5a5f68" stroke-width="0.95"/>
<path d="M8 11.4 L9.15 13.75 L11.7 14.1 L9.85 15.9 L10.3 18.4 L8 17.2 L5.7 18.4 L6.15 15.9 L4.3 14.1 L6.85 13.75 Z" fill="#fff" stroke="#5a5f68" stroke-width="0.8" stroke-linejoin="round"/></svg>
<div class="r" style="left:825px;top:710.5px;width:590px;height:1.0px;background:#f3f4f7;border-radius:0px;"></div>
<div class="r" style="left:848px;top:720.3px;width:34px;height:34px;border-radius:50%;background:#f3e2fa"></div>
<div class="t" style="left:858.77px;top:734.00px;font-size:10px;color:#3e4a5c;-webkit-text-stroke:0.3px #3e4a5c;">TS</div>
<div class="t" style="left:903.85px;top:724.00px;font-size:12.5px;color:#3e4a5c;-webkit-text-stroke:0.3px #3e4a5c;letter-spacing:0.330px;">Tupac Shakur</div>
<div class="t" style="left:903.70px;top:741.00px;font-size:12.5px;color:#4f5b6c;letter-spacing:0.182px;">5 closed deals| 33% hit rate</div>
<div class="r" style="left:1085px;top:723px;width:144.4000000000001px;height:29px;background:#eff2f6;border-radius:6px;"></div>
<div class="t" style="left:1095.65px;top:732.00px;font-size:12px;color:#3e4a5c;-webkit-text-stroke:0.3px #3e4a5c;letter-spacing:0.221px;">$89,000</div>
<div class="r" style="left:825px;top:764.5px;width:590px;height:1.0px;background:#f3f4f7;border-radius:0px;"></div>
<div class="r" style="left:848px;top:774.3px;width:34px;height:34px;border-radius:50%;background:#e6e1fb"></div>
<div class="t" style="left:858.46px;top:788.00px;font-size:10px;color:#3e4a5c;-webkit-text-stroke:0.3px #3e4a5c;">BS</div>
<div class="t" style="left:903.85px;top:778.00px;font-size:12.5px;color:#3e4a5c;-webkit-text-stroke:0.3px #3e4a5c;letter-spacing:0.104px;">Biggie Smalls</div>
<div class="t" style="left:903.70px;top:795.00px;font-size:12.5px;color:#4f5b6c;letter-spacing:0.182px;">3 closed deals| 22% hit rate</div>
<div class="r" style="left:1085px;top:777px;width:77.40000000000009px;height:29px;background:#eff2f6;border-radius:6px;"></div>
<div class="t" style="left:1095.65px;top:786.00px;font-size:12px;color:#3e4a5c;-webkit-text-stroke:0.3px #3e4a5c;letter-spacing:0.221px;">$35,000</div>
<div class="r" style="left:0;top:0;width:1440px;height:943px;clip-path:inset(499.3px 25px 102.70000000000005px 825px)">
<div class="r" style="left:825px;top:818.5px;width:590px;height:1.0px;background:#f3f4f7;border-radius:0px;"></div>
<div class="r" style="left:848px;top:828.3px;width:34px;height:34px;border-radius:50%;background:#dff4fb"></div>
<div class="t" style="left:903.85px;top:832.00px;font-size:12.5px;color:#3e4a5c;-webkit-text-stroke:0.3px #3e4a5c;letter-spacing:0.244px;">Johanna Andersson</div>
<div class="r" style="left:1085px;top:831px;width:15px;height:29px;background:#eff2f6;border-radius:6px;"></div>
<div class="r" style="left:825px;top:819px;width:590px;height:21.299999999999955px;background:linear-gradient(rgba(255,255,255,.35),rgba(255,255,255,.6))"></div>
</div>
<div class="r" style="left:1408px;top:549px;width:3px;height:81px;background:#e9ecf1;border-radius:2px;"></div>
</body></html>
